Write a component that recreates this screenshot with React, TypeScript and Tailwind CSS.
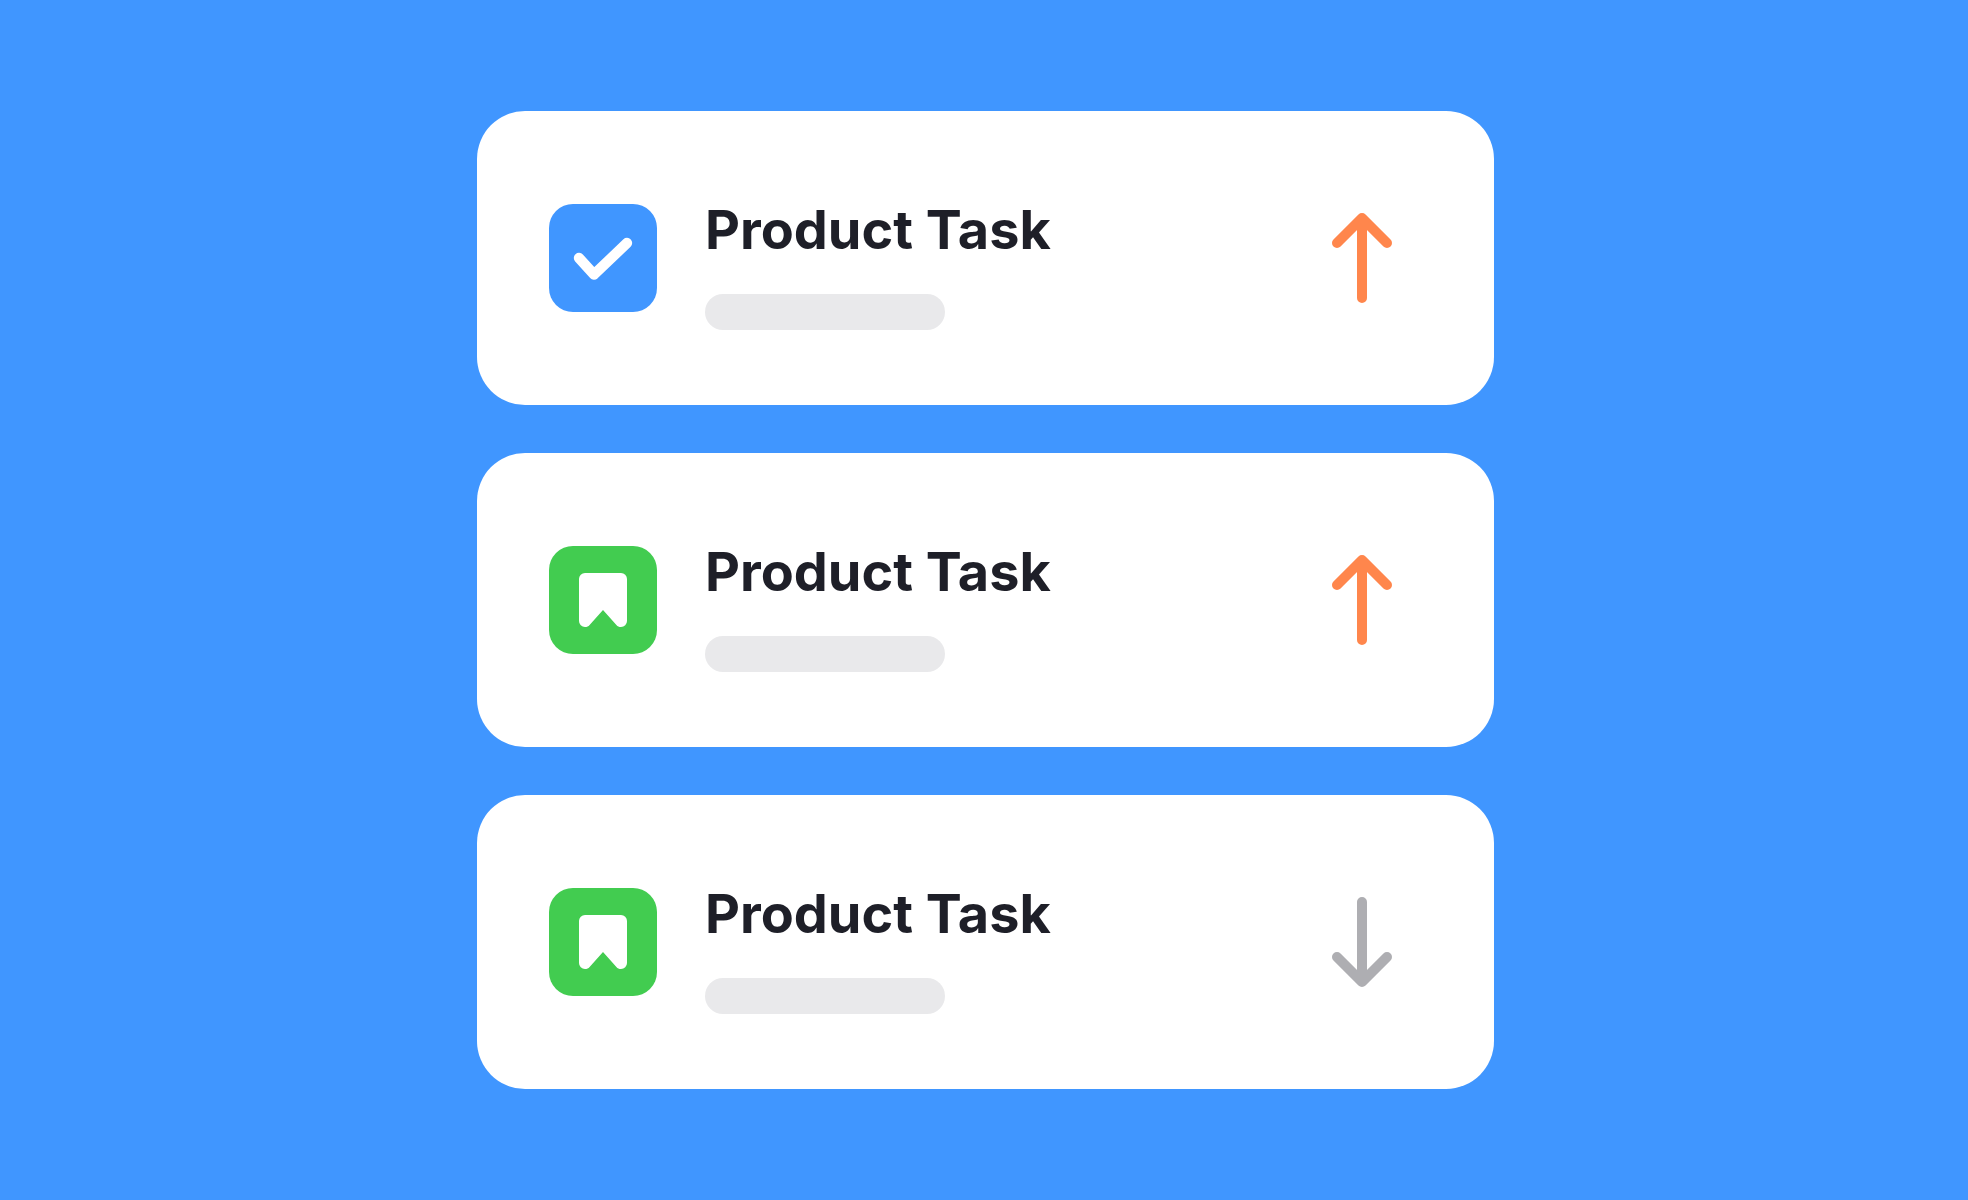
type Task = {
  id: number
  title: string
  kind: 'task' | 'story'
  priority: 'high' | 'low'
}

const tasks: Task[] = [
  { id: 1, title: 'Product Task', kind: 'task', priority: 'high' },
  { id: 2, title: 'Product Task', kind: 'story', priority: 'high' },
  { id: 3, title: 'Product Task', kind: 'story', priority: 'low' },
]

function KindIcon({ kind }: { kind: Task['kind'] }) {
  if (kind === 'task') {
    return (
      <div className="size-27 shrink-0 rounded-3xl bg-[#4096ff]">
        <svg viewBox="0 0 108 108" fill="none" className="size-full" aria-hidden="true">
          <path
            d="M30 54L45 70.6L78 39"
            stroke="white"
            strokeWidth="10.4"
            strokeLinecap="round"
            strokeLinejoin="round"
          />
        </svg>
      </div>
    )
  }
  return (
    <div className="size-27 shrink-0 rounded-3xl bg-[#42cc50]">
      <svg viewBox="0 0 108 108" className="size-full" aria-hidden="true">
        <path
          d="M36 27H72A6 6 0 0 1 78 33V75A6 6 0 0 1 72 81C70 81 68.6 80.4 67.4 79L54 64L40.6 79C39.4 80.4 38 81 36 81A6 6 0 0 1 30 75V33A6 6 0 0 1 36 27Z"
          fill="white"
        />
      </svg>
    </div>
  )
}

function PriorityIcon({ priority }: { priority: Task['priority'] }) {
  const high = priority === 'high'
  return (
    <svg
      viewBox="0 0 120 120"
      fill="none"
      stroke="currentColor"
      strokeWidth="10"
      strokeLinecap="round"
      strokeLinejoin="round"
      className={high ? 'size-30 shrink-0 text-[#ff864c]' : 'size-30 shrink-0 text-[#aeaeb2]'}
      aria-hidden="true"
    >
      <path d={high ? 'M60 100V20M35 45L60 20L85 45' : 'M60 20V100M35 75L60 100L85 75'} />
    </svg>
  )
}

function TaskCard({ task }: { task: Task }) {
  return (
    <li className="flex items-center gap-12 rounded-[48px] bg-white px-18 py-[75px]">
      <KindIcon kind={task.kind} />
      <div className="min-w-0 flex-1 space-y-5">
        <h2 className="text-[54px] leading-[88px] font-bold text-[#1e1f28]">{task.title}</h2>
        <div className="h-9 w-60 rounded-full bg-[#e9e9eb]" />
      </div>
      <PriorityIcon priority={task.priority} />
    </li>
  )
}

export default function App() {
  return (
    <main className="flex min-h-screen items-center justify-center bg-[#4096ff] py-12 pr-8 pl-[35px] font-['Inter',sans-serif]">
      <ul className="w-full max-w-[1017px] space-y-12">
        {tasks.map((task) => (
          <TaskCard key={task.id} task={task} />
        ))}
      </ul>
    </main>
  )
}
